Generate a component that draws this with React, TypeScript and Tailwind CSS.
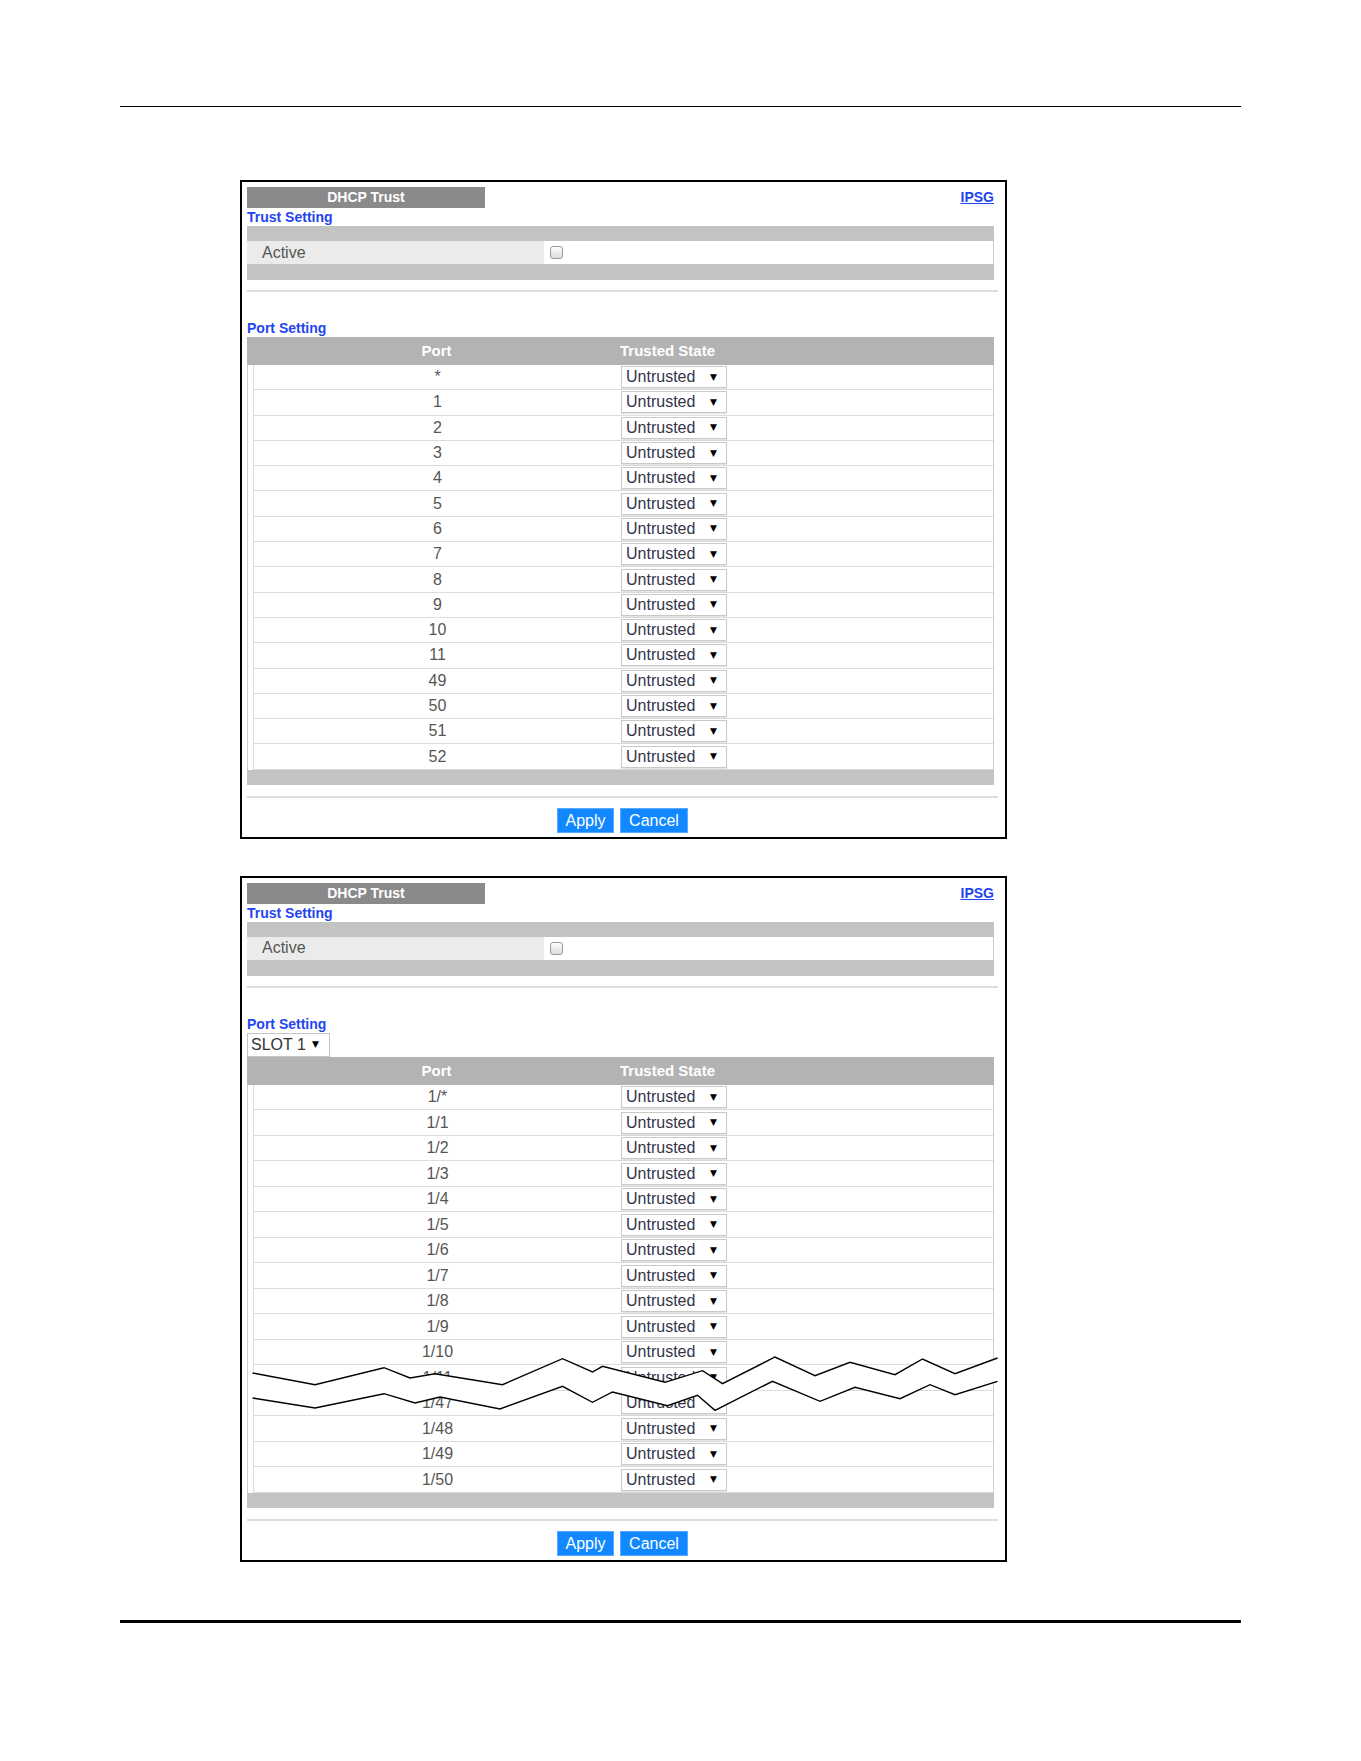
const firstPorts = ["*", "1", "2", "3", "4", "5", "6", "7", "8", "9", "10", "11", "49", "50", "51", "52"];
const slotPorts = [
  "1/*", "1/1", "1/2", "1/3", "1/4", "1/5", "1/6", "1/7", "1/8", "1/9", "1/10", "1/11", "1/47", "1/48", "1/49", "1/50",
];

// break marks drawn across the slot table (panel-local coordinates)
const breakTop: [number, number][] = [
  [12.5, 497], [75, 508.7], [144, 491.7], [170, 502], [195, 497.7], [262.5, 508.7], [322.5, 482.7],
  [352.5, 496], [362.5, 490.3], [425, 506.3], [462.5, 494.7], [482.5, 507.7], [535, 481], [575, 499.7],
  [610, 486.3], [655, 498.7], [682.5, 483], [715, 497.7], [757.5, 482],
];
const breakBottom: [number, number][] = [
  [12.5, 522], [75, 532], [144, 517.7], [175, 527], [200, 521], [260, 533], [322.5, 510.3],
  [352.5, 526.3], [372.5, 516], [427.5, 529.7], [457.5, 519.3], [475, 534.3], [532.5, 505.3], [580, 525.3],
  [615, 511.3], [660, 522.7], [690, 508.7], [715, 518.7], [757.5, 505.3],
];

const pts = (list: [number, number][]) => list.map(([x, y]) => `${x},${y}`).join(" ");

const StateSelect = () => (
  <div className="flex h-[22px] w-[106px] items-center justify-between border border-[#c9c9c9] bg-white pl-[4px] pr-[9px] text-[16px] leading-none text-[#34344a] shadow-[0_1px_1px_rgba(0,0,0,0.1)]">
    <span>Untrusted</span>
    <span className="text-[9px] text-black [font-family:'DejaVu_Sans',sans-serif]">▼</span>
  </div>
);

const Panel = ({ ports, slot, rowH }: { ports: string[]; slot?: boolean; rowH: string }) => (
  <div className="relative w-[767px] border-2 border-black pb-[4px] pl-[5px] pr-[7px] pt-[5px]">
    {/* title bar */}
    <div className="flex h-[21px] items-center justify-between">
      <div className="flex h-[21px] w-[238px] items-center justify-center bg-[#8a8a8a] text-[14px] font-bold text-white">
        DHCP Trust
      </div>
      <span className="mr-[4px] text-[14px] font-bold text-[#1f45f0] underline">IPSG</span>
    </div>

    <div className="h-[18px] text-[14px] font-bold leading-[18px] text-[#1f45f0]">Trust Setting</div>
    <div className="w-[747px]">
      <div className="h-[15px] bg-[#c3c3c3]" />
      <div className="flex h-[23px] items-center">
        <div className="flex h-full w-[297px] items-center bg-[#ebebeb] pl-[15px] text-[16px] text-[#555]">Active</div>
        <div className="flex h-full flex-1 items-center border-r border-[#cccccc] bg-white">
          <div className="ml-[6px] h-[13px] w-[13px] rounded-[3px] border border-[#9a9a9a] bg-linear-to-b from-[#fdfdfd] to-[#dcdcdc]" />
        </div>
      </div>
      <div className="h-[16px] bg-[#c3c3c3]" />
    </div>

    <div className="mt-[10px] h-[2px] bg-[#dddddd]" />

    <div className="mt-[27px] h-[18px] text-[14px] font-bold leading-[18px] text-[#1f45f0]">Port Setting</div>
    {slot && (
      <div className="flex h-[24px] w-[83px] items-center justify-between border border-[#c4c4c4] bg-white pl-[3px] pr-[10px] text-[16px] leading-none text-[#333]">
        <span>SLOT 1</span>
        <span className="text-[9px] text-black [font-family:'DejaVu_Sans',sans-serif]">▼</span>
      </div>
    )}

    {/* port table */}
    <div className="w-[747px]">
      <div className="flex h-[28px] items-center bg-[#b3b3b3] pl-[6px] text-[15px] font-bold text-white">
        <div className="w-[367px] text-center">Port</div>
        <div>Trusted State</div>
      </div>
      <div className="border-l border-r border-[#cfcfcf] pl-[5px]">
        {ports.map((port) => (
          <div key={port} className={`flex ${rowH} items-center border-b border-l border-[#dcdcdc]`}>
            <div className="w-[367px] text-center text-[16px] text-[#555]">{port}</div>
            <StateSelect />
          </div>
        ))}
      </div>
      <div className="h-[15px] bg-[#c3c3c3]" />
    </div>

    <div className="mt-[11px] h-[2px] bg-[#dddddd]" />

    <div className="mt-[10px] flex justify-center gap-[6px]">
      <button className="h-[25px] w-[57px] border border-[#5aa8ff] bg-[#1188ff] text-[16px] text-white">Apply</button>
      <button className="h-[25px] w-[68px] border border-[#5aa8ff] bg-[#1188ff] text-[16px] text-white">Cancel</button>
    </div>

    {slot && (
      <svg
        className="pointer-events-none absolute -left-[2px] -top-[2px]"
        width="767"
        height="690"
        viewBox="0 0 767 690"
      >
        <polygon points={`${pts(breakTop)} ${pts([...breakBottom].reverse())}`} fill="white" />
        <polyline points={pts(breakTop)} fill="none" stroke="black" strokeWidth="1.4" />
        <polyline points={pts(breakBottom)} fill="none" stroke="black" strokeWidth="1.4" />
      </svg>
    )}
  </div>
);

export default function App() {
  return (
    <div className="h-[1761px] w-[1361px] bg-white [font-family:'Liberation_Sans',Arial,sans-serif]">
      <div className="pt-[106px]">
        <div className="mx-[120px] h-px bg-black" />
      </div>
      <div className="ml-[240px] mt-[73px]">
        <Panel ports={firstPorts} rowH="h-[25.3px]" />
      </div>
      <div className="ml-[240px] mt-[37px]">
        <Panel ports={slotPorts} slot rowH="h-[25.5px]" />
      </div>
      <div className="mx-[120px] mt-[58px] h-[3px] bg-black" />
    </div>
  );
}
